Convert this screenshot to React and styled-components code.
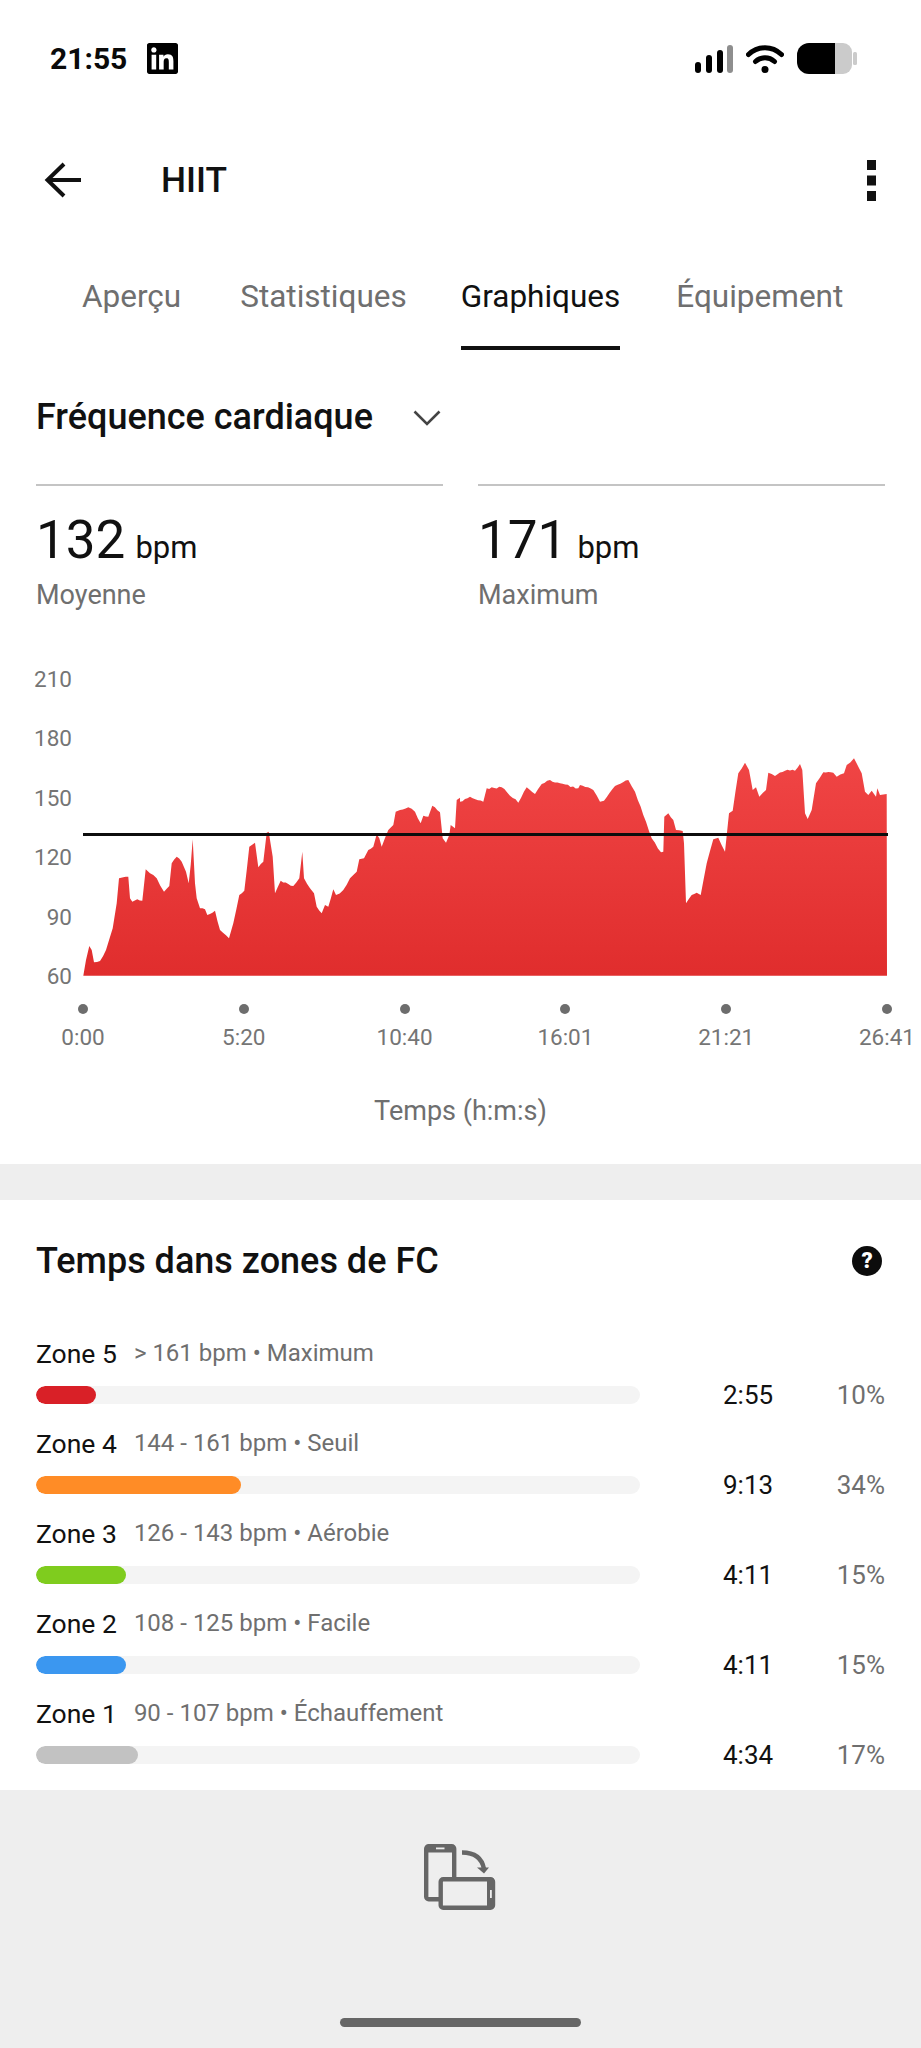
import React from "react";
import styled, { createGlobalStyle } from "styled-components";
import { SiLinkedin } from "react-icons/si";

const Global = createGlobalStyle`
  html, body { margin: 0; padding: 0; background: #fff; }
  body { font-family: Roboto, "Liberation Sans", sans-serif; }
  #root { width: 921px; height: 2048px; overflow: hidden; }
`;

const Page = styled.div`
  width: 921px;
  height: 2048px;
  display: flex;
  flex-direction: column;
  background: #fff;
  overflow: hidden;
  color: #111;
`;

const StatusBar = styled.div`
  height: 117px;
  box-sizing: border-box;
  padding: 43px 64px 0 50px;
  display: flex;
  align-items: flex-start;
  justify-content: space-between;
  flex: none;
`;
const StatusLeft = styled.div`
  display: flex;
  align-items: center;
  gap: 20px;
  height: 31px;
`;
const Clock = styled.span`
  font-size: 30px;
  font-weight: 700;
  color: #0a0a0a;
`;
const StatusRight = styled.div`
  display: flex;
  align-items: center;
  gap: 13px;
  height: 31px;
`;
const Logo = styled(SiLinkedin)`
  width: 31px;
  height: 31px;
  color: #000;
`;

const Header = styled.div`
  height: 126px;
  flex: none;
  box-sizing: border-box;
  padding: 0 45px 0 44px;
  display: flex;
  align-items: center;
`;
const Title = styled.h1`
  margin: 0 0 0 79px;
  flex: 1;
  font-size: 35.3px;
  font-weight: 500;
  color: #111;
`;

const Tabs = styled.div`
  height: 107px;
  flex: none;
  display: flex;
`;
const Tab = styled.div`
  margin-left: ${(p) => p.$left}px;
  height: 103px;
  line-height: 107px;
  font-size: 31.5px;
  white-space: nowrap;
  color: ${(p) => (p.$active ? "#111" : "#6f6f6f")};
  border-bottom: 4px solid ${(p) => (p.$active ? "#111" : "transparent")};
`;

const Selector = styled.div`
  height: 134px;
  flex: none;
  box-sizing: border-box;
  padding: 0 36px;
  display: flex;
  align-items: flex-start;
  gap: 40px;
`;
const SelectorLabel = styled.span`
  font-size: 36px;
  font-weight: 500;
  line-height: 42px;
  margin-top: 46px;
  color: #111;
`;
const Chevron = styled.svg`
  width: 28px;
  height: 16px;
  margin-top: 60px;
`;

const Stats = styled.div`
  flex: none;
  display: grid;
  grid-template-columns: 407px 407px;
  gap: 35px;
  padding: 0 36px;
  height: 192px;
`;
const Stat = styled.div`
  border-top: 2px solid #c4c4c4;
  padding-top: 24px;
`;
const StatValue = styled.div`
  display: flex;
  align-items: baseline;
  gap: 10px;
  font-size: 53px;
  line-height: 60px;
  color: #111;
  span { font-size: 31px; }
`;
const StatLabel = styled.div`
  font-size: 27px;
  line-height: 36px;
  margin-top: -1px;
  color: #6f6f6f;
`;

const Chart = styled.div`
  flex: none;
  height: 310px;
  display: flex;
`;
const YAxis = styled.div`
  width: 72px;
  flex: none;
  height: 323px;
  margin-top: -10px;
  display: flex;
  flex-direction: column;
  justify-content: space-between;
  align-items: flex-end;
  font-size: 22.5px;
  line-height: 26px;
  color: #757575;
`;
const Plot = styled.svg`
  width: 806px;
  height: 300px;
  margin-left: 11px;
  display: block;
  flex: none;
`;

const XAxis = styled.div`
  flex: none;
  display: flex;
  justify-content: space-between;
  width: 864px;
  margin-left: 53px;
  height: 53px;
  margin-top: 18px;
`;
const Tick = styled.div`
  width: 60px;
  display: flex;
  flex-direction: column;
  align-items: center;
  font-size: 22.5px;
  line-height: 26px;
  color: #757575;
  i {
    display: block;
    width: 10px;
    height: 10px;
    border-radius: 50%;
    background: #6d6d6d;
    margin-bottom: 10px;
  }
`;
const AxisTitle = styled.div`
  flex: none;
  text-align: center;
  font-size: 27px;
  line-height: 36px;
  height: 107px;
  padding-top: 36px;
  box-sizing: border-box;
  color: #6f6f6f;
`;

const Band = styled.div`
  height: 36px;
  flex: none;
  background: #eeeeee;
`;

const Zones = styled.section`
  flex: none;
  height: 590px;
  box-sizing: border-box;
  padding: 0 36px;
`;
const ZonesHead = styled.div`
  height: 122px;
  display: flex;
  align-items: center;
  justify-content: space-between;
  padding-right: 3px;
`;
const ZonesTitle = styled.h2`
  margin: 0;
  font-size: 36px;
  font-weight: 500;
  color: #111;
`;
const Help = styled.div`
  width: 30px;
  height: 30px;
  border-radius: 50%;
  background: #0c0c0c;
  color: #fff;
  font-size: 22px;
  font-weight: 900;
  line-height: 30px;
  text-align: center;
`;
const ZoneRow = styled.div`
  height: 90px;
  display: grid;
  grid-template-columns: 604px 1fr 60px;
  grid-template-rows: 64px 26px;
`;
const ZoneHead = styled.div`
  grid-column: 1 / 3;
  display: flex;
  align-items: center;
  gap: 17px;
  padding-bottom: 2px;
  font-size: 26.5px;
  color: #111;
  white-space: nowrap;
`;
const ZoneInfo = styled.span`
  font-size: 24px;
  color: #6f6f6f;
`;
const Track = styled.div`
  grid-column: 1;
  height: 18px;
  border-radius: 9px;
  background: #f4f4f4;
  overflow: hidden;
`;
const Fill = styled.div`
  height: 100%;
  border-radius: 9px;
  background: ${(p) => p.$color};
`;
const ZoneTime = styled.div`
  grid-column: 2;
  font-size: 26px;
  line-height: 30px;
  margin-top: -6px;
  padding-left: 83px;
  color: #111;
`;
const ZonePct = styled.div`
  grid-column: 3;
  font-size: 26px;
  line-height: 30px;
  margin-top: -6px;
  text-align: right;
  color: #6f6f6f;
`;

const Footer = styled.div`
  flex: 1;
  background: #eeeeee;
  display: flex;
  flex-direction: column;
  align-items: center;
`;
const RotateIcon = styled.svg`
  width: 72px;
  height: 66px;
  margin-top: 54px;
  margin-left: -1px;
`;
const HomeBar = styled.div`
  width: 241px;
  height: 9px;
  border-radius: 5px;
  background: #666;
  margin-top: 108px;
`;

const left = [
  [250,977],[258,930],[268,888],[275,900],[282,937],[300,933],[318,900],[338,835],[350,760],[357,685],[370,682],[385,680],[390,745],[397,755],[412,748],[427,752],[437,658],[450,670],[470,685],[492,725],[508,708],[515,640],[530,620],[545,635],[558,665],[566,700],[572,645],[578,568],[585,700],[590,745],[600,775],[615,778],[622,795],[645,782],[660,840],[687,865],[700,820],[718,735],[733,722],[748,590],[765,578],[775,652],[790,635],[800,548],[806,545],[818,620],[825,730],[842,692],[880,708],[898,685],[907,605],[912,685],[930,715],[942,730],[950,770],[965,790],[975,765],[985,770],[1000,718],[1008,735],[1030,720],[1050,685],[1070,665],[1078,628],[1092,625],[1105,600],[1120,590],[1130,553],[1138,565],[1145,590],[1165,540],[1180,525],[1187,485],[1200,480],[1225,472],[1245,485],[1262,520],[1270,497],[1285,500],[1297,467],[1320,487],[1328,565],[1338,578],[1348,555],[1352,525],[1365,535],[1370,450],[1380,443],
];
const right = [
  [0,455],[30,440],[70,455],[80,415],[125,412],[175,458],[200,412],[225,432],[245,402],[270,390],[300,400],[355,415],[360,405],[400,420],[420,455],[432,452],[465,408],[505,390],[525,425],[550,495],[575,565],[603,607],[610,605],[613,500],[625,490],[640,510],[648,540],[668,543],[672,580],[678,760],[695,735],[710,728],[722,735],[740,640],[760,568],[775,563],[795,605],[807,490],[818,482],[835,370],[855,338],[867,360],[878,420],[888,412],[898,440],[918,420],[925,368],[945,378],[975,362],[1005,362],[1020,342],[1027,360],[1035,490],[1043,507],[1055,480],[1068,400],[1090,367],[1120,368],[1130,380],[1152,370],[1160,345],[1182,325],[1205,370],[1215,425],[1225,435],[1235,422],[1248,440],[1252,415],[1260,435],[1280,432],
];

// plot origin in page coords: x 83, y 676; long segments get a small deterministic ripple
const pagePts = [
  ...left.map(([x, y]) => [x / 3, 650 + y / 3]),
  ...right.map(([x, y]) => [460 + x / 3, 650 + y / 3]),
];
const rippled = [];
pagePts.forEach(([x, y], i) => {
  if (i > 0) {
    const [px, py] = pagePts[i - 1];
    const steps = Math.floor((x - px) / 2.5);
    for (let s = 1; s < steps; s++) {
      const t = s / steps;
      const n = Math.sin((px + s) * 12.9898) * 43758.5453;
      rippled.push([px + (x - px) * t, py + (y - py) * t + (n - Math.floor(n) - 0.5) * 1.8]);
    }
  }
  rippled.push([x, y]);
});
const area = [...rippled, [887, 975.7]]
  .map(([x, y]) => `${(x - 83).toFixed(1)},${(y - 676).toFixed(1)}`)
  .join(" ");

const yLabels = ["210", "180", "150", "120", "90", "60"];
const xLabels = ["0:00", "5:20", "10:40", "16:01", "21:21", "26:41"];
const zones = [
  { name: "Zone 5", info: "> 161 bpm • Maximum", color: "#d92027", w: 60, time: "2:55", pct: "10%" },
  { name: "Zone 4", info: "144 - 161 bpm • Seuil", color: "#ff8c26", w: 205, time: "9:13", pct: "34%" },
  { name: "Zone 3", info: "126 - 143 bpm • Aérobie", color: "#7fcc1e", w: 90, time: "4:11", pct: "15%" },
  { name: "Zone 2", info: "108 - 125 bpm • Facile", color: "#3b97f0", w: 90, time: "4:11", pct: "15%" },
  { name: "Zone 1", info: "90 - 107 bpm • Échauffement", color: "#c2c2c2", w: 102, time: "4:34", pct: "17%" },
];

export default function App() {
  return (
    <Page>
      <Global />
      <StatusBar>
        <StatusLeft>
          <Clock>21:55</Clock>
          <Logo />
        </StatusLeft>
        <StatusRight>
          <svg width="38" height="30" viewBox="0 0 38 30">
            <rect x="0" y="18" width="6" height="11" rx="3" fill="#000" />
            <rect x="11" y="11" width="6" height="18" rx="3" fill="#000" />
            <rect x="22" y="6" width="6" height="23" rx="3" fill="#000" />
            <rect x="32" y="1" width="6" height="28" rx="3" fill="#8e8e8e" />
          </svg>
          <svg width="38" height="31" viewBox="0 0 38 31" fill="none" stroke="#000" strokeWidth="5">
            <path d="M2.5 11.5C12 2.5 26 2.5 35.5 11.5" strokeLinecap="round" />
            <path d="M9.5 18.5C15 13.5 23 13.5 28.5 18.5" strokeLinecap="round" />
            <circle cx="19" cy="26.5" r="3.5" fill="#000" stroke="none" />
          </svg>
          <svg width="60" height="31" viewBox="0 0 60 31">
            <path d="M12 0H38V31H12A12 12 0 0 1 0 19V12A12 12 0 0 1 12 0Z" fill="#000" />
            <path d="M38 0H46A9 9 0 0 1 55 9V22A9 9 0 0 1 46 31H38Z" fill="#cbcbcb" />
            <rect x="56" y="9" width="4" height="13" rx="1.5" fill="#cbcbcb" />
          </svg>
        </StatusRight>
      </StatusBar>

      <Header>
        <svg width="38" height="36" viewBox="0 0 38 36" fill="none" stroke="#111" strokeWidth="4">
          <path d="M20 2L3.5 18L20 34" />
          <path d="M3.5 18H37" />
        </svg>
        <Title>HIIT</Title>
        <svg width="9" height="41" viewBox="0 0 9 41" fill="#111">
          <rect y="0" width="9" height="10" />
          <rect y="15.5" width="9" height="10" />
          <rect y="31" width="9" height="10" />
        </svg>
      </Header>

      <Tabs>
        <Tab $left={82}>Aperçu</Tab>
        <Tab $left={59}>Statistiques</Tab>
        <Tab $left={54} $active>Graphiques</Tab>
        <Tab $left={56}>Équipement</Tab>
      </Tabs>

      <Selector>
        <SelectorLabel>Fréquence cardiaque</SelectorLabel>
        <Chevron viewBox="0 0 28 16" fill="none" stroke="#444" strokeWidth="2.6">
          <path d="M1.5 1.5L14 14L26.5 1.5" />
        </Chevron>
      </Selector>

      <Stats>
        <Stat>
          <StatValue>132<span>bpm</span></StatValue>
          <StatLabel>Moyenne</StatLabel>
        </Stat>
        <Stat>
          <StatValue>171<span>bpm</span></StatValue>
          <StatLabel>Maximum</StatLabel>
        </Stat>
      </Stats>

      <Chart>
        <YAxis>
          {yLabels.map((l) => <span key={l}>{l}</span>)}
        </YAxis>
        <Plot viewBox="0 0 806 300">
          <defs>
            <linearGradient id="hr" x1="0" y1="0" x2="0" y2="1">
              <stop offset="0" stopColor="#f04545" />
              <stop offset="1" stopColor="#e02d2d" />
            </linearGradient>
          </defs>
          <polygon points={area} fill="url(#hr)" />
          <rect x="0" y="157" width="805" height="3" fill="#0d0d0d" />
        </Plot>
      </Chart>

      <XAxis>
        {xLabels.map((l) => <Tick key={l}><i />{l}</Tick>)}
      </XAxis>

      <AxisTitle>Temps (h:m:s)</AxisTitle>
      <Band />

      <Zones>
        <ZonesHead>
          <ZonesTitle>Temps dans zones de FC</ZonesTitle>
          <Help>?</Help>
        </ZonesHead>
        {zones.map((z) => (
          <ZoneRow key={z.name}>
            <ZoneHead>{z.name}<ZoneInfo>{z.info}</ZoneInfo></ZoneHead>
            <Track><Fill $color={z.color} style={{ width: z.w }} /></Track>
            <ZoneTime>{z.time}</ZoneTime>
            <ZonePct>{z.pct}</ZonePct>
          </ZoneRow>
        ))}
      </Zones>

      <Footer>
        <RotateIcon viewBox="0 0 72 66">
          <rect x="2.2" y="2.2" width="28" height="53" rx="2.5" fill="none" stroke="#666" strokeWidth="4.4" />
          <rect x="1" y="1" width="30" height="7.5" rx="2.5" fill="#666" />
          <rect x="12" y="3.5" width="8.5" height="1.8" fill="#eee" />
          <rect x="16.7" y="35.2" width="52.3" height="28.5" rx="2.5" fill="#eee" stroke="#666" strokeWidth="4.4" />
          <rect x="63" y="34" width="7" height="30" rx="2" fill="#666" />
          <rect x="66" y="46" width="1.8" height="8" fill="#eee" />
          <path d="M38 8.5C50 8.5 58 14 60 25" fill="none" stroke="#666" strokeWidth="4.4" />
          <path d="M53 23.5H65L60 29.5Z" fill="#666" />
        </RotateIcon>
        <HomeBar />
      </Footer>
    </Page>
  );
}
